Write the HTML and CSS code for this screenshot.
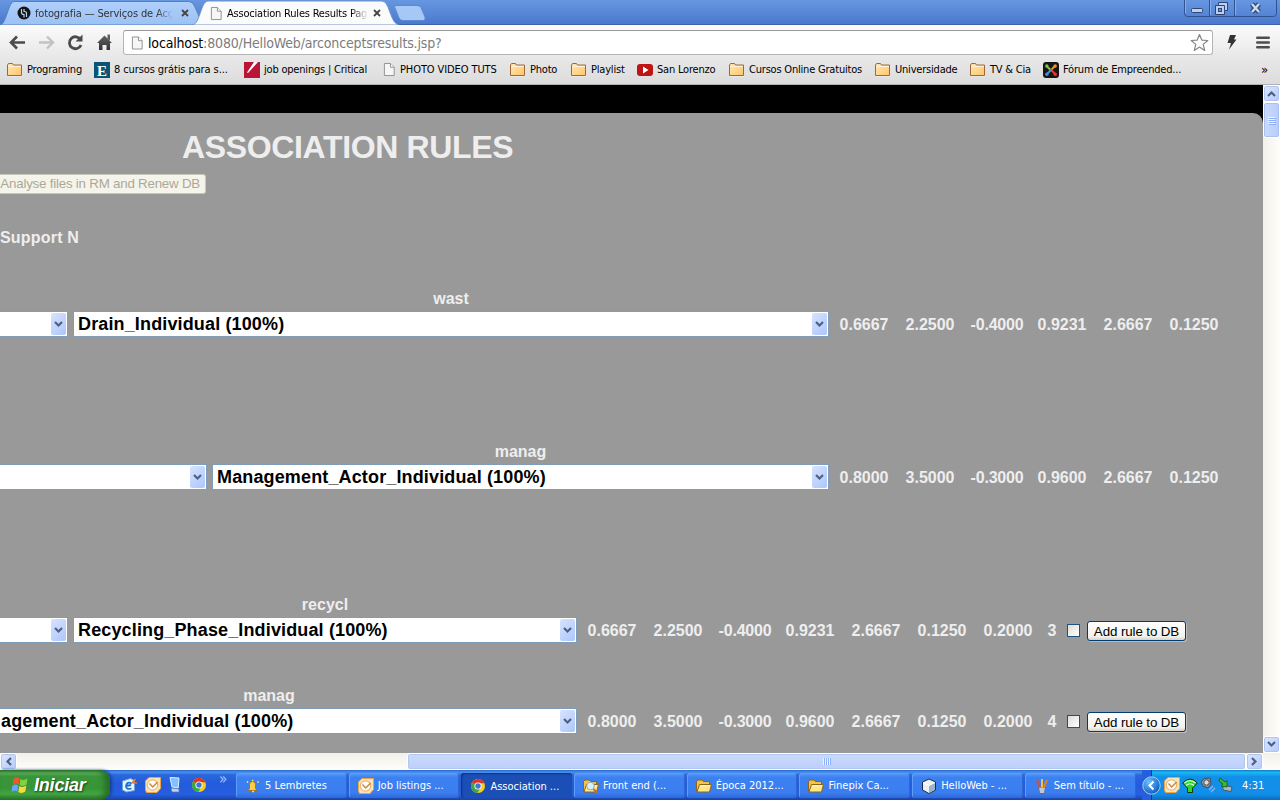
FILE: index.html
```html
<!DOCTYPE html>
<html lang="pt">
<head>
<meta charset="utf-8">
<title>Association Rules Results Page</title>
<link rel="stylesheet" href="styles.css">
</head>
<body>
<svg width="0" height="0" class="defs" aria-hidden="true">
  <defs>
    <linearGradient id="fold" x1="0" y1="0" x2="1" y2="1"><stop offset="0" stop-color="#ffe9b8"/><stop offset="1" stop-color="#ffc568"/></linearGradient>
    <linearGradient id="tab" x1="0" y1="0" x2="0" y2="1"><stop offset="0" stop-color="#b0cffb"/><stop offset="1" stop-color="#9cc1f4"/></linearGradient>
    <linearGradient id="dark" x1="0" y1="0" x2="0" y2="1"><stop offset="0" stop-color="#666"/><stop offset="1" stop-color="#333"/></linearGradient>
    <radialGradient id="orb" cx=".35" cy=".3" r=".8"><stop offset="0" stop-color="#6fc0ff"/><stop offset="1" stop-color="#0753b8"/></radialGradient>
    <symbol id="folder" viewBox="0 0 16 16"><path d="M1 13V2.500L2 1.500h4l1 1.500h8v10.500H1z" fill="#fff" opacity=".6" transform="translate(0 1)"/><path d="M.5 13.500V3L1.500 1.500h4L6.500 3h8v10.500z" fill="url(#fold)" stroke="#a0683a"/><path d="M1.500 4.500h12.500" stroke="#fff3d4"/></symbol>
    <symbol id="page" viewBox="0 0 14 16"><path d="M1.500 1.500h6.500l4 4v9h-10.500z" fill="#f6f6f6" stroke="#8c8c8c"/><path d="M8 1.500v4h4" fill="#fff" stroke="#8c8c8c"/></symbol>
    <symbol id="chrome" viewBox="0 0 16 16"><circle cx="8" cy="8" r="7" fill="#f7cd1b"/><path d="M8 8 1.900 4.500A7 7 0 0 1 14.500 5.300H8z" fill="#df3325"/><path d="M8 8 1.900 4.500A7 7 0 0 0 7.400 15L10.500 9.500z" fill="#3aa648"/><circle cx="8" cy="8" r="3.600" fill="#fff"/><circle cx="8" cy="8" r="2.700" fill="#3c78d2"/></symbol>
    <symbol id="outlook" viewBox="0 0 16 16"><path d="M4 .5h11.500v11L12 15.500H1.500L.5 13V4z" fill="#fbe3b4" stroke="#e9a34a"/><circle cx="7.500" cy="8" r="5.200" fill="#fffdf6" stroke="#eab878" stroke-width="1.200"/><path d="m4.500 6.500 3.200 3.500 5-5" fill="none" stroke="#c98a44" stroke-width="1.500"/></symbol>
    <symbol id="xpfolder" viewBox="0 0 16 16"><path d="M.5 13.500V3.500L2 2h4l1.500 1.500h6v3" fill="#f2c349" stroke="#8e6416"/><path d="M1 14 3.500 6.500H15.500L13.500 14z" fill="#ffe783" stroke="#8e6416"/><path d="M4.300 8h9.500" stroke="#fff8c9"/></symbol>
    <symbol id="down" viewBox="0 0 9 7"><path d="m1 1 3.500 3.500L8 1" fill="none" stroke="#4d6185" stroke-width="2.200"/></symbol>
    <symbol id="x" viewBox="0 0 8 8"><path d="m1 1 6 6M7 1 1 7" stroke="#444" stroke-width="1.800"/></symbol>
  </defs>
</svg>

<div class="titlebar">
  <svg class="tabshapes" width="430" height="25" viewBox="0 0 430 25">
    <path d="M0 25C4 24 5 19 9 8Q11.500 1.500 14 1.500H189Q193 1.500 195 7L201 21V25z" fill="url(#tab)" stroke="#557fbd"/>
    <path d="M395 8Q393.500 5.500 396 5.500H417Q420 5.500 421 7.500L425 17Q426 20.500 423 20.500H403Q400 20.500 399 18z" fill="#a6c8f7" stroke="#5c8ace"/>
    <path d="M192 25C197 24 198 19 202 8Q204.500 1 208 1H382Q386 1 388 7C392 18 394 24 399 25z" fill="#fbfbfb" stroke="#6f93c9"/>
  </svg>
  <div class="tabs">
    <div class="tab tab-first">
      <svg width="14" height="14" viewBox="0 0 14 14"><circle cx="7" cy="7" r="6.500" fill="#151515"/><path d="M4.500 3v3.500q0 2 2.500 2V11.500M9.500 11V7.500q0-2-2.500-2V3" fill="none" stroke="#b8d1f2" stroke-width="1.200"/></svg>
      <span class="tab-text muted">fotografia — Serviços de Acç</span>
      <svg class="close" width="8" height="8"><use href="#x"/></svg>
    </div>
    <div class="tab tab-active">
      <svg width="13" height="15"><use href="#page"/></svg>
      <span class="tab-text fade">Association Rules Results Pag</span>
      <svg class="close" width="8" height="8"><use href="#x"/></svg>
    </div>
  </div>
  <svg class="winbtns" width="94" height="18" viewBox="0 0 94 18">
    <path d="M.5 0V13.500Q.5 16.500 3.500 16.500H89.500Q92.500 16.500 92.500 13.500V0M25.500 0V16M50.500 0V16" fill="none" stroke="#31528f"/>
    <path d="M1.500 0V13M26.500 0V15M51.500 0V15" stroke="#86aeea" fill="none"/>
    <rect x="7.500" y="8.500" width="11" height="4" rx="1" fill="#b9cff3" stroke="#30466f"/>
    <path d="M34.500 2.500h9v8h-3v4h-9v-9h3z" fill="#b9cff3" stroke="#30466f"/><path d="M34.500 5.500h6v5" fill="none" stroke="#30466f"/><rect x="34.500" y="8.500" width="3" height="3" fill="#6c93da" stroke="#30466f"/>
    <path d="m68 4 7 8m0-8-7 8" stroke="#30466f" stroke-width="5"/><path d="m68 4 7 8m0-8-7 8" stroke="#c8d9f6" stroke-width="2.500"/>
  </svg>
</div>

<div class="toolbar">
  <svg class="nav" width="116" height="30" viewBox="0 0 116 30">
    <path d="M25 17.500H12M17 11.500l-6 6 6 6" fill="none" stroke="#4b4b4b" stroke-width="2.600"/>
    <path d="M39 17.500H52M47 11.500l6 6-6 6" fill="none" stroke="#c2c2c2" stroke-width="2.400"/>
    <path d="M80.500 14.500A6 6 0 1 0 81 20" fill="none" stroke="#4b4b4b" stroke-width="2.800"/><path d="M82.500 9.500v7h-7z" fill="#4b4b4b"/>
    <path d="m97 18 7.500-7.500L112 18h-2v7h-3.500v-5h-4v5H99v-7zM107.500 9.500h2.500v6l-2.500-2z" fill="url(#dark)"/>
  </svg>
  <div class="omnibox">
    <svg width="13" height="16"><use href="#page"/></svg>
    <span class="url"><b>localhost</b>:8080/HelloWeb/arconceptsresults.jsp?</span>
    <svg class="star" width="19" height="19" viewBox="0 0 19 19"><path d="m9.500 1.500 2.300 5.600 6 .4-4.600 3.900 1.500 6-5.200-3.300-5.200 3.300 1.500-6L1.200 7.500l6-.4z" fill="#fff" stroke="#858585" stroke-width="1.200" stroke-linejoin="round"/></svg>
  </div>
  <svg class="bolt" width="12" height="17" viewBox="0 0 12 17"><path d="M4 1h6L8 5.500h2.500L3 15.500 5 9H1.500z" fill="#333"/></svg>
  <svg class="menu" width="14" height="13" viewBox="0 0 14 13"><path d="M1.300 1.700h11.400M1.300 6.500h11.400M1.300 11.300h11.400" stroke="#4d4d4d" stroke-width="2.600" stroke-linecap="round"/></svg>
</div>

<div class="bookmarks">
  <span class="bm w87"><svg width="16" height="16"><use href="#folder"/></svg>Programing</span>
  <span class="bm w150 wide"><svg width="16" height="16" viewBox="0 0 16 16"><rect width="16" height="16" fill="#0c5473"/><text x="3" y="13.500" class="serif-e">E</text></svg>8 cursos grátis para s...</span>
  <span class="bm w139"><svg width="16" height="16" viewBox="0 0 16 16"><rect width="16" height="16" fill="#b91536"/><path d="M10 0h4L4 11l-1-.5z" fill="#fff"/></svg>job openings | Critical</span>
  <span class="bm w127 wide"><svg class="pg" width="13" height="15"><use href="#page"/></svg>PHOTO VIDEO TUTS</span>
  <span class="bm w61"><svg width="16" height="16"><use href="#folder"/></svg>Photo</span>
  <span class="bm w66"><svg width="16" height="16"><use href="#folder"/></svg>Playlist</span>
  <span class="bm w92"><svg width="16" height="16" viewBox="0 0 16 16"><rect y="2" width="16" height="12" rx="3" fill="#bd1414"/><path d="M6 4.500v7L11.500 8z" fill="#fff"/></svg>San Lorenzo</span>
  <span class="bm w146"><svg width="16" height="16"><use href="#folder"/></svg>Cursos Online Gratuitos</span>
  <span class="bm w95"><svg width="16" height="16"><use href="#folder"/></svg>Universidade</span>
  <span class="bm w73"><svg width="16" height="16"><use href="#folder"/></svg>TV &amp; Cia</span>
  <span class="bm"><svg width="16" height="16" viewBox="0 0 16 16"><rect width="16" height="16" rx="3" fill="#161616"/><g fill="none" stroke-width="2"><path d="M4 4.500 8.500 9" stroke="#8bc53f"/><path d="M12 4 7 9" stroke="#f7931e"/><path d="M12 12 7.500 7" stroke="#e8352e"/><path d="M4 12 8.500 7.500" stroke="#3f8fdb"/></g><circle cx="3.800" cy="4" r="1.700" fill="#8bc53f"/><circle cx="12.200" cy="4" r="1.700" fill="#f7931e"/><circle cx="12.200" cy="12.200" r="1.700" fill="#e8352e"/><circle cx="3.800" cy="12.200" r="1.700" fill="#3f8fdb"/></svg>Fórum de Empreended...</span>
  <span class="more">»</span>
</div>

<div class="view">
  <div class="page">
    <div class="panel">
      <h1>ASSOCIATION RULES</h1>
      <div class="analyse"><span>Analyse files in RM and Renew DB</span></div>
      <div class="support">Support N</div>

      <div class="rule">
        <div class="select lead lead-short"><span class="arrow"><svg width="9" height="7"><use href="#down"/></svg></span></div>
        <div class="concept upper"><div class="term">wast</div><div class="select"><span>Drain_Individual (100%)</span><span class="arrow"><svg width="9" height="7"><use href="#down"/></svg></span></div></div>
        <div class="vals"><span>0.6667</span><span>2.2500</span><span class="neg">-0.4000</span><span>0.9231</span><span>2.6667</span><span>0.1250</span></div>
      </div>
      <div class="rule far">
        <div class="select lead lead-long"><span class="arrow"><svg width="9" height="7"><use href="#down"/></svg></span></div>
        <div class="concept second"><div class="term">manag</div><div class="select"><span>Management_Actor_Individual (100%)</span><span class="arrow"><svg width="9" height="7"><use href="#down"/></svg></span></div></div>
        <div class="vals"><span>0.8000</span><span>3.5000</span><span class="neg">-0.3000</span><span>0.9600</span><span>2.6667</span><span>0.1250</span></div>
      </div>
      <div class="rule far">
        <div class="select lead lead-short"><span class="arrow"><svg width="9" height="7"><use href="#down"/></svg></span></div>
        <div class="concept third"><div class="term">recycl</div><div class="select"><span>Recycling_Phase_Individual (100%)</span><span class="arrow"><svg width="9" height="7"><use href="#down"/></svg></span></div></div>
        <div class="vals"><span>0.6667</span><span>2.2500</span><span class="neg">-0.4000</span><span>0.9231</span><span>2.6667</span><span>0.1250</span><span>0.2000</span><span class="n">3</span></div>
        <i class="check"></i><div class="add">Add rule to DB</div>
      </div>
      <div class="rule near">
        <div class="concept fourth"><div class="term">manag</div><div class="select"><span>agement_Actor_Individual (100%)</span><span class="arrow"><svg width="9" height="7"><use href="#down"/></svg></span></div></div>
        <div class="vals"><span>0.8000</span><span>3.5000</span><span class="neg">-0.3000</span><span>0.9600</span><span>2.6667</span><span>0.1250</span><span>0.2000</span><span class="n">4</span></div>
        <i class="check"></i><div class="add">Add rule to DB</div>
      </div>
    </div>
  </div>
  <div class="vscroll">
    <div class="sb"><svg class="flip" width="9" height="7"><use href="#down"/></svg></div>
    <div class="vthumb"><i></i><i></i><i></i><i></i></div>
    <div class="sb end"><svg width="9" height="7"><use href="#down"/></svg></div>
  </div>
</div>
<div class="hscroll">
  <div class="sb"><svg class="left" width="9" height="7"><use href="#down"/></svg></div>
  <div class="hthumb"><i></i><i></i><i></i><i></i></div>
  <div class="sb"><svg class="right" width="9" height="7"><use href="#down"/></svg></div>
</div>

<div class="taskbar">
  <div class="start">
    <svg width="18" height="18" viewBox="0 0 18 18"><path d="M2.500 3Q5.500.5 8.500 2.500L7.500 8.500Q4.500 6.500 1.500 9z" fill="#f0582a"/><path d="M9.500 3Q12.500 5 16.500 2.500L15.500 8.500Q12 11 8.500 9z" fill="#7ed33e"/><path d="M1.300 10Q4.300 7.500 7.300 9.500L6.300 15.500Q3.500 14 .5 16z" fill="#6aa5ff"/><path d="M8.300 10Q11.500 12 15.300 9.500L14.300 15.500Q11 18 7.300 16z" fill="#ffd63b"/></svg>
    <span>Iniciar</span>
  </div>
  <div class="quick">
    <svg width="17" height="16" viewBox="0 0 17 16"><path d="m1.500 4 8-2.500 4 2v10l-8 1.500-4-2z" fill="#e9f4ff" stroke="#69a6dd"/><path d="M10.500 6.500Q6 4 5 9q0 4 5.500 2.500M5 9l5-1" fill="none" stroke="#1673d1" stroke-width="1.800"/><path d="m10 7 4.500-5M12 6h4" stroke="#e8792c" stroke-width="1.500"/></svg>
    <svg width="16" height="16"><use href="#outlook"/></svg>
    <svg width="14" height="16" viewBox="0 0 14 16"><path d="m2 .5 9 .5-.8 10L4 10z" fill="#7fc2ff" stroke="#dff0ff"/><path d="m3 11 8 1v3L4 15z" fill="#c9d3e8" stroke="#5f77b0" stroke-width=".7"/></svg>
    <svg width="16" height="16"><use href="#chrome"/></svg>
    <span>»</span>
  </div>
  <div class="tasks">
    <div class="task"><svg width="16" height="16" viewBox="0 0 16 16"><path d="M4.500 10.500V6.500a3 3 0 0 1 6 0V10.500l1.500 2h-9z" fill="#ffcf3f" stroke="#a3731e"/><path d="M7 2.500h1.500M7 13.500h2M2.500 3v2M13 3v2" stroke="#ffd875" stroke-width="1.300"/></svg><span>5 Lembretes</span></div>
    <div class="task"><svg width="16" height="16"><use href="#outlook"/></svg><span>Job listings ...</span></div>
    <div class="task on"><svg width="16" height="16"><use href="#chrome"/></svg><span>Association ...</span></div>
    <div class="task"><svg width="16" height="16"><use href="#xpfolder"/><circle cx="7.500" cy="8" r="3.800" fill="#d8efff" stroke="#8faac0"/><path d="m10.500 11 3.500 4" stroke="#c06f37" stroke-width="2"/></svg><span>Front end (...</span></div>
    <div class="task"><svg width="16" height="16"><use href="#xpfolder"/></svg><span>Época 2012...</span></div>
    <div class="task"><svg width="16" height="16"><use href="#xpfolder"/></svg><span>Finepix Ca...</span></div>
    <div class="task"><svg width="16" height="16" viewBox="0 0 16 16"><path d="m8 1 6.500 3v8L8 15.500 1.500 12V4z" fill="#e9f1f7" stroke="#1d2c45"/><path d="M8 7.500V15l6-3.300V4.500z" fill="#9bb4c9"/><path d="m2 4.500 6 3 6-3" fill="none" stroke="#fff"/></svg><span>HelloWeb - ...</span></div>
    <div class="task"><svg width="16" height="16" viewBox="0 0 16 16"><path d="M4.500 9h7l-1 6.500h-5z" fill="#bcc8d8" stroke="#5e6b83"/><path d="M6 9 3 2" stroke="#dc4b2a" stroke-width="2"/><path d="M8 9V1" stroke="#f3c13a" stroke-width="2"/><path d="m10 9 3-7" stroke="#d97f33" stroke-width="2"/></svg><span>Sem título - ...</span></div>
  </div>
  <div class="tray">
    <svg class="orb" width="19" height="19" viewBox="0 0 19 19"><circle cx="9.500" cy="9.500" r="8.700" fill="url(#orb)" stroke="#9cd0fa"/><path d="m11.500 5.500-4 4 4 4" fill="none" stroke="#fff" stroke-width="2"/></svg>
    <svg width="16" height="16"><use href="#outlook"/></svg>
    <svg width="16" height="16" viewBox="0 0 16 16"><path d="M.7 6Q8-2 15.300 6L12 9.500 10.500 11v4.500h-5V11L4 9.500z" fill="#2bd52b" stroke="#063d06"/><path d="M2.500 6Q8 1.500 13.500 6M4 8.500Q8 5 12 8.500" fill="none" stroke="#f2fff2" stroke-width="1.200"/></svg>
    <svg width="16" height="16" viewBox="0 0 16 16"><path d="m1 5 3-3.500 6-.5 1 6-3 4-5-2z" fill="#8e949d" stroke="#464b55"/><circle cx="6.500" cy="5.500" r="2.700" fill="#d8dbe0" stroke="#4a4a4a"/><path d="m9 13 4-4m-2 6 4-4" stroke="#8fb3ff" stroke-width="1.200"/></svg>
    <svg width="16" height="16" viewBox="0 0 16 16"><path d="m5 8 9 2-1 4.500-8-1.500z" fill="#aeb8c1" stroke="#4c5762"/><path d="m2 1 5 4 2-1.500V10L3 9l2-2-4-3z" fill="#42b83c" stroke="#16681a"/></svg>
    <span class="clock">4:31</span>
  </div>
</div>
</body>
</html>
```
FILE: styles.css
```css
* { box-sizing: border-box; }
body { margin: 0; width: 1280px; height: 800px; overflow: hidden; display: flex; flex-direction: column; font: 11px "DejaVu Sans Condensed", "Noto Sans", sans-serif; color: #000; background: #fff; white-space: nowrap; }
.defs { position: absolute; }
svg { display: block; flex: none; }
i { font-style: normal; }

/* window frame */
.titlebar { height: 25px; flex: none; position: relative; display: flex; justify-content: space-between; background: linear-gradient(#6797e1, #4a79cd); border-bottom: 1px solid #3c62aa; }
.tabshapes { position: absolute; left: 0; top: 0; }
.tabs { display: flex; position: relative; }
.tab { display: flex; align-items: center; height: 26px; }
.tab-first { padding-left: 17px; width: 210px; }
.tab-active { width: 200px; }
.tab-text { width: 138px; margin-left: 4px; overflow: hidden; letter-spacing: -.15px; -webkit-mask-image: linear-gradient(90deg, #000 88%, transparent); }
.fade { margin-left: 4px; width: 141px; letter-spacing: -.2px; }
.muted { color: #333; }
.close { margin-left: 8px; }
.tab-active .close { margin-left: 5px; }
.winbtns { margin-right: 2px; }

.toolbar { height: 30px; flex: none; display: flex; align-items: center; background: linear-gradient(#fbfbfb, #e9e9e9); }
.nav { margin-right: 7px; }
.omnibox { width: 1090px; height: 25px; margin-top: 5px; display: flex; align-items: center; padding-left: 7px; background: #fff; border: 1px solid #b5b5b5; border-top-color: #999; border-radius: 3px; }
.url { margin-left: 4px; font-size: 14px; color: #7c7c7c; letter-spacing: -.16px; flex: 1; }
.url b { color: #000; font-weight: normal; }
.star { margin-right: 3px; }
.bolt { margin: 5px 0 0 13px; }
.menu { margin: 5px 0 0 18px; }

.bookmarks { height: 30px; flex: none; display: flex; align-items: center; padding-left: 7px; background: linear-gradient(#e9e9e9, #dcdcdc); border-bottom: 1px solid #b0b0b0; letter-spacing: -.2px; }
.bm { display: flex; align-items: center; gap: 4px; flex: none; }
.wide { letter-spacing: -.1px; }
.w87 { width: 87px; } .w150 { width: 150px; } .w139 { width: 139px; } .w127 { width: 127px; } .w61 { width: 61px; } .w66 { width: 66px; } .w92 { width: 92px; } .w146 { width: 146px; } .w95 { width: 95px; } .w73 { width: 73px; }
.serif-e { font: bold 15px "Liberation Serif", serif; fill: #fff; }
.more { margin-left: auto; margin-right: 12px; font-size: 13px; }

/* page viewport */
.view { height: 668px; flex: none; display: flex; }
.page { width: 1263px; background: #000; padding-top: 28px; overflow: hidden; font-family: "Liberation Sans", Arial, sans-serif; }
.panel { height: 640px; background: #999; border-top-right-radius: 10px; padding-top: 16px; color: #eee; font-weight: bold; font-size: 16px; line-height: 18px; }
h1 { margin: 0 0 0 182px; font-size: 32px; line-height: 37px; height: 37px; letter-spacing: -.35px; }
.analyse { width: 206px; height: 20px; margin-top: 8px; background: #f5f4ea; border: 1px solid #c9c7ba; border-left: 0; border-radius: 0 3px 3px 0; color: #aca899; font-size: 13.33px; font-weight: normal; letter-spacing: -.22px; display: flex; justify-content: flex-end; align-items: center; padding-right: 5px; }
.analyse span { flex: none; }
.support { margin: 35px 0 42px; height: 18px; letter-spacing: .2px; }
.rule { height: 48px; display: flex; align-items: flex-end; }
.far { margin-top: 105px; }
.near { margin-top: 43px; }
.select { height: 26px; background: #fff; border: 1px solid #7f9db9; color: #000; font-size: 18px; letter-spacing: .14px; display: flex; align-items: center; justify-content: space-between; padding: 1px 1px 1px 4px; }
.lead { border-left: 0; justify-content: flex-end; margin-right: 5px; }
.lead-short { width: 68px; }
.lead-long { width: 207px; }
.arrow { width: 15px; height: 22px; border-radius: 2px; background: linear-gradient(135deg, #d7e3fe, #adc6fa); display: flex; align-items: center; justify-content: center; }
.term { text-align: center; height: 18px; line-height: 20px; margin-bottom: 4px; }
.upper { width: 756px; }
.second { width: 617px; }
.third { width: 504px; }
.fourth { width: 577px; }
.fourth .term { margin-left: -39px; }
.fourth .select { border-left: 0; padding-left: 1px; }
.vals { display: flex; height: 26px; line-height: 20px; align-items: center; margin-left: 2px; }
.vals span { width: 66px; height: 18px; text-align: center; }
.vals .neg { letter-spacing: -.2px; padding-left: 2px; }
.vals .n { width: 22px; }
.check { width: 13px; height: 13px; margin: 0 7px 6px 4px; border: 1px solid #1d5281; background: linear-gradient(135deg, #dcdcd7, #fff); }
.add { width: 99px; height: 20px; margin-bottom: 2px; border: 1px solid #003c74; border-radius: 3px; background: linear-gradient(#fff, #f3f2ec 80%, #d8d2c6); color: #000; font-weight: normal; font-size: 13.33px; letter-spacing: -.1px; text-align: center; line-height: 19px; box-shadow: 1px 1px 0 #bbb; }

/* scrollbars */
.vscroll { width: 17px; background: linear-gradient(90deg, #f2f0ea, #fefefb); display: flex; flex-direction: column; }
.sb { width: 17px; height: 17px; flex: none; border: 1px solid #fff; border-radius: 3px; background: linear-gradient(135deg, #dce6fe, #b5cafa); box-shadow: inset 0 0 0 1px #b0c4f0; display: flex; align-items: center; justify-content: center; }
.flip { transform: rotate(180deg); }
.left { transform: rotate(90deg); }
.right { transform: rotate(-90deg); }
.end { margin-top: auto; }
.vthumb { height: 36px; border: 1px solid #fff; border-radius: 3px; background: linear-gradient(90deg, #cbdafd, #b9cdfb); box-shadow: inset 0 0 0 1px #aabfee; display: flex; flex-direction: column; gap: 1px; align-items: center; justify-content: center; }
.vthumb i { width: 7px; height: 1px; background: #eef4fe; box-shadow: 1px 1px 0 #8cb0f8; }
.hscroll { height: 17px; flex: none; display: flex; padding-right: 17px; background: linear-gradient(#f2f0ea, #fefefb); }
.hthumb { width: 839px; margin-left: 390px; height: 17px; border: 1px solid #fff; border-radius: 3px; background: linear-gradient(#cbdafd, #bccffb); box-shadow: inset 0 0 0 1px #b2c6f2; display: flex; gap: 1px; align-items: center; justify-content: center; }
.hthumb i { width: 1px; height: 7px; background: #eef4fe; box-shadow: 1px 0 0 #8cb0f8; }

/* taskbar */
.taskbar { height: 30px; flex: none; display: flex; color: #fff; background: linear-gradient(#2a64c8 0, #4a90f0 7%, #2a66dc 17%, #245bdb 45%, #265ee0 82%, #1941a5); }
.start { width: 110px; display: flex; align-items: center; padding-left: 11px; gap: 5px; border-radius: 0 10px 10px 0; background: linear-gradient(#2f7a2f, #5cb05c 10%, #3a963a 22%, #379437 60%, #42a742 80%, #2b742b); box-shadow: inset -5px 0 6px #256c25, 2px 0 3px #173f9c; font: italic bold 18px "Liberation Sans", sans-serif; letter-spacing: -.2px; text-shadow: 1px 1px 2px #173d17; }
.quick { width: 126px; display: flex; align-items: center; padding-left: 11px; }
.quick svg + svg { margin-left: 7px; }
.quick svg:nth-child(4) { margin-left: 9px; }
.quick span { margin: -12px 0 0 12px; font-size: 15px; color: #a9cbff; }
.tasks { display: flex; gap: 2px; width: 906px; padding-top: 3px; }
.task { width: 110.7px; height: 25px; flex: none; display: flex; align-items: center; gap: 4px; padding-left: 9px; border-radius: 3px; background: linear-gradient(#5a9afa, #3c81f0 18%, #3a7df0 80%, #2e68d5); box-shadow: inset 1px 1px 0 #5f9dfa, inset -1px 0 0 #2e66cf; }
.on { background: #1c4fb5; box-shadow: inset 1px 1px 2px #0e3275; padding-top: 1px; }
.tray { width: 138px; display: flex; align-items: center; gap: 2px; background: linear-gradient(90deg, #265ee0 9px, #0c3f99 9px, #0c3f99 10px, transparent 10px), linear-gradient(#1478c4, #19b9f3 8%, #1290e8 22%, #118fe9 80%, #0d6bc0); }
.orb { margin-right: 1px; }
.clock { margin-left: 6px; }
```
